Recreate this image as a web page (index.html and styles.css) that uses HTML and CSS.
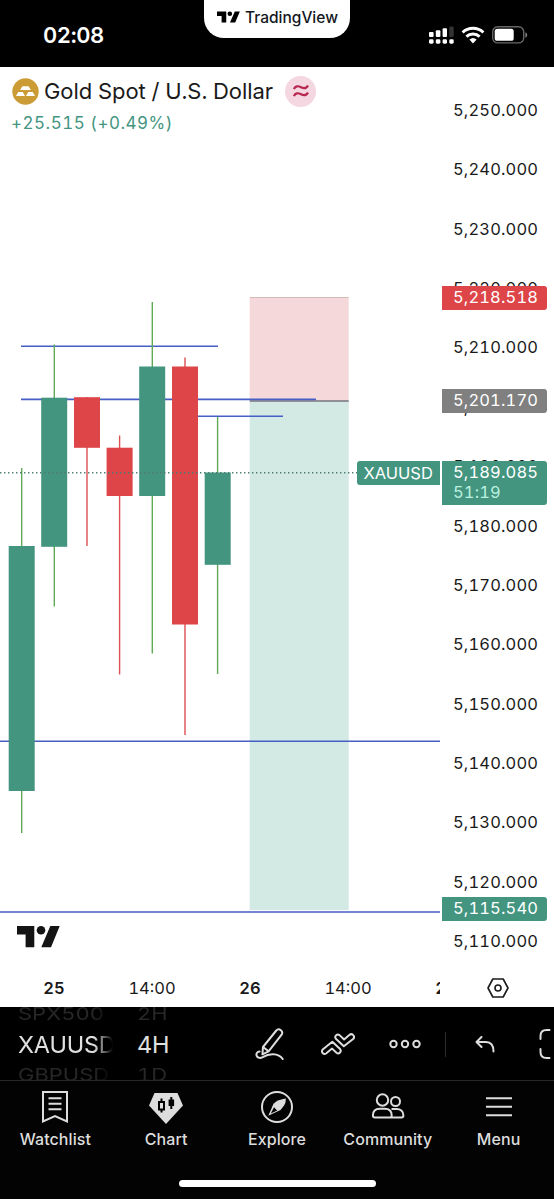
FILE: index.html
```html
<!DOCTYPE html>
<html lang="en">
<head>
    <meta charset="UTF-8">
    <meta name="viewport" content="width=device-width, initial-scale=1.0">
    <title>XAUUSD 4H</title>
    <link rel="stylesheet" href="styles.css">
</head>
<body>
    <header class="status-bar">
        <div class="clock">02:08</div>
        <div class="brand">
            <svg width="23" height="12" viewBox="0 0 43 21"><path d="M0 0h17.300v21H8.600V8.500H0z M34 21h-9.700L33.300 0h9.400z"/><circle cx="24" cy="4.300" r="4.300"/></svg>
            <span>TradingView</span>
        </div>
        <div class="status-icons">
            <svg class="signal" width="25" height="18" viewBox="0 0 25 18">
                <rect x="0" y="6" width="4.6" height="5" rx="1"/><rect x="6.8" y="4.3" width="4.6" height="6.7" rx="1"/>
                <rect x="13.6" y="2.2" width="4.4" height="8.8" rx="1"/><rect x="20.3" y="0.5" width="4.4" height="10.5" rx="1" fill="#333"/>
                <rect x="0" y="13.3" width="4.6" height="4.4" rx="1.4"/><rect x="6.8" y="13.3" width="4.6" height="4.4" rx="1.4"/>
                <rect x="13.6" y="13.3" width="4.4" height="4.4" rx="1.4"/><rect x="20.3" y="13.3" width="4.4" height="4.4" rx="1.4"/>
            </svg>
            <svg class="wifi" width="24" height="18" viewBox="0 0 24 18">
                <g fill="none" stroke="#fff" stroke-width="3"><path d="M1.600 6.500a15 15 0 0 1 20.800 0"/><path d="M5.400 10.600a9.600 9.600 0 0 1 13.200 0"/></g>
                <path d="M8.400 13.600a5.400 5.400 0 0 1 7.200 0L12 17.400z"/>
            </svg>
            <svg class="battery" width="36" height="18" viewBox="0 0 36 18">
                <rect x="0.7" y="0.7" width="31" height="16.200" rx="5" fill="none" stroke="#666" stroke-width="1.4"/>
                <rect x="2.7" y="2.8" width="19" height="12" rx="2.6"/>
                <path d="M33.300 6.200q2 .8 2 2.800t-2 2.800z" fill="#777"/>
            </svg>
        </div>
    </header>

    <main class="chart">
        <section class="plot">
            <div class="legend">
                <div class="legend-title">
                    <svg width="27" height="27" viewBox="0 0 27 27">
                        <circle cx="13.5" cy="13.5" r="13.2" fill="#cb9c35"/>
                        <path d="M10.400 8.200h6.200l2.200 3.800H8.200z M6.300 13.900h4.500l2.200 4H4z M16.200 13.900h4.500l2.300 4h-9z" fill="#fff"/>
                    </svg>
                    <h1>Gold Spot / U.S. Dollar</h1>
                    <span class="approx">
                        <svg width="16" height="14" viewBox="0 0 16 14"><g fill="none" stroke="#b7274f" stroke-width="2.2"><path d="M.9 5.200C2.200 1.800 5 1.600 8 3.200s5.400 1.200 7-1.800"/><path d="M.9 12.200c1.300-3.400 4.100-3.600 7.100-2s5.400 1.200 7-1.800"/></g></svg>
                    </span>
                </div>
                <div class="change">+25.515 (+0.49%)</div>
            </div>

            <svg class="candles" width="440" height="895" viewBox="0 67 440 895">
                <!-- short position -->
                <rect x="249.7" y="297.5" width="99" height="103.5" fill="#f5d8da"/>
                <rect x="249.7" y="401" width="99" height="509" fill="#d3e9e4"/>
                <path d="M249.700 297.500h99" stroke="#d3bdb6"/>
                <path d="M249.700 401h99" stroke="#75757f" stroke-width="1.5"/>
                <!-- levels -->
                <g stroke="#465fc5" stroke-width="1.6">
                    <path d="M21 346.300h197M21 399.400h295M185 416.300h98M0 741.300h440M0 912h440"/>
                </g>
                <g stroke="#62a957" stroke-width="1.4">
                    <path d="M21.700 468v365M54.300 344.500v262M152.300 302v351.500M217.600 417v257"/>
                </g>
                <g stroke="#dc5055" stroke-width="1.4">
                    <path d="M87 397v149M119.600 435.500v239M185 357.500v377.500"/>
                </g>
                <g fill="#43957f">
                    <rect x="8.7" y="546" width="26" height="245"/>
                    <rect x="41.2" y="397.7" width="26" height="149.1"/>
                    <rect x="139.2" y="366.5" width="26" height="129.5"/>
                    <rect x="204.7" y="472.5" width="26" height="92.3"/>
                </g>
                <g fill="#dd4549">
                    <rect x="74" y="397.2" width="26" height="50.6"/>
                    <rect x="106.6" y="447.7" width="26" height="48.3"/>
                    <rect x="172" y="366.5" width="26" height="258"/>
                </g>
                <path d="M0 472.700h357" stroke="#4d7d70" stroke-width="1.4" stroke-dasharray="1.4 2.600"/>
                <g fill="#141414" transform="translate(17 926)">
                    <path d="M0 0h17.300v21.300H8.600V8.600H0z M34 21.300h-9.700L33.300 0h9.400z"/><circle cx="24" cy="4.3" r="4.3"/>
                </g>
            </svg>
            <div class="tag symbol-tag">XAUUSD</div>

            <div class="time-scale">
                <span class="day">25</span>
                <span>14:00</span>
                <span class="day">26</span>
                <span>14:00</span>
                <span class="day">27</span>
            </div>
        </section>

        <aside class="price-scale">
            <div class="prices">
                <span>5,250.000</span>
                <span>5,240.000</span>
                <span>5,230.000</span>
                <span>5,220.000</span>
                <span>5,210.000</span>
                <span>5,200.000</span>
                <span>5,190.000</span>
                <span>5,180.000</span>
                <span>5,170.000</span>
                <span>5,160.000</span>
                <span>5,150.000</span>
                <span>5,140.000</span>
                <span>5,130.000</span>
                <span>5,120.000</span>
                <span>5,110.000</span>
            </div>
            <div class="tag price-tag stop">5,218.518</div>
            <div class="tag price-tag entry">5,201.170</div>
            <div class="tag price-tag last">5,189.085<small>51:19</small></div>
            <div class="tag price-tag target">5,115.540</div>
            <div class="scale-settings">
                <svg width="22" height="20" viewBox="0 0 22 20" fill="none" stroke="#1a1a1a" stroke-width="1.6" stroke-linejoin="round"><path d="M5.800 1h10.400L21 10l-4.800 9H5.800L1 10z"/><circle cx="11" cy="10" r="3"/></svg>
            </div>
        </aside>
    </main>

    <div class="toolbar">
        <div class="picker symbols">
            <span class="ghost">SPX500</span>
            <span class="current">XAUUSD</span>
            <span class="ghost">GBPUSD</span>
        </div>
        <div class="picker intervals">
            <span class="ghost">2H</span>
            <span class="current">4H</span>
            <span class="ghost">1D</span>
        </div>
        <button class="tool" aria-label="Draw">
            <svg width="30" height="34" viewBox="0 0 30 34"><path d="M8 20L21.300 3.500a3.400 3.400 0 0 1 5.300 4.200L13.600 24.300 7.400 27.300z M8 20l5.600 4.300 M4.600 24.500c-2.600.2-3.700 2.400-2.900 4.400.8 2.200 3.600 2.600 6 1.200 6-3.800 15.700-4.600 20 1.900"/></svg>
        </button>
        <button class="tool" aria-label="Indicators">
            <svg width="34" height="22" viewBox="0 0 34 22"><path d="M1.700 16.500L11.300 8.700l7.800 7.400a2.600 2.600 0 0 1-3.600 3.700l-4.400-4.200-5.500 4.500a2.500 2.500 0 0 1-3.900-3.600z M32.100 6L22.800 13.300 14.900 5.800a2.600 2.600 0 0 1 3.600-3.700l4.600 4.400 5.200-4.400A2.500 2.500 0 0 1 32.100 6z"/></svg>
        </button>
        <button class="tool" aria-label="More">
            <svg width="32" height="10" viewBox="0 0 32 10"><circle cx="4.5" cy="5" r="3.2"/><circle cx="16" cy="5" r="3.2"/><circle cx="27.5" cy="5" r="3.2"/></svg>
        </button>
        <span class="separator"></span>
        <button class="tool" aria-label="Undo">
            <svg width="20" height="17" viewBox="0 0 20 17"><path d="M6.500 1L1.500 6l5 5M1.500 6H11c4.500 0 7.500 3 7.500 9.500"/></svg>
        </button>
        <button class="tool fullscreen" aria-label="Fullscreen">
            <svg width="34" height="30" viewBox="0 0 34 30"><path d="M1.500 10V7c0-4 2-6 6-6h3M1.500 20v3c0 4 2 6 6 6h3M23.500 1h3c4 0 6 2 6 6v3M32.500 20v3c0 4-2 6-6 6h-3"/></svg>
        </button>
    </div>

    <nav class="tabs">
        <a class="tab">
            <svg width="34" height="34" viewBox="0 0 34 34"><path d="M5 2h24v29.500l-12-5.500-12 5.500z M10.500 8.300h13M10.500 13.800h13M10.500 19.300h13"/></svg>
            <span>Watchlist</span>
        </a>
        <a class="tab active">
            <svg width="34" height="34" viewBox="0 0 34 34"><path class="solid" d="M5.500 3h23L34 15.500 17 34 0 15.500z"/><path class="dark" d="M12.500 8.500v14M22.300 7v12"/><rect x="10" y="12" width="5" height="7.500" fill="#ddd" stroke="#000" stroke-width="2"/><rect x="19.600" y="9.500" width="5.500" height="6.500" fill="#000" stroke="none"/></svg>
            <span>Chart</span>
        </a>
        <a class="tab">
            <svg width="34" height="34" viewBox="0 0 34 34"><circle cx="17" cy="17" r="15"/><path class="solid" d="M25.900 8.500q0 4.600-2 7.300L20.500 20 8.300 25.700 13.500 13.700q4.500-4.300 12.400-5.200z"/><path class="hole" d="M10.800 23.500l3.200-6.300 3.200 3.200z"/></svg>
            <span>Explore</span>
        </a>
        <a class="tab">
            <svg width="34" height="34" viewBox="0 0 34 34"><circle cx="11.500" cy="10" r="5.700"/><circle cx="24.500" cy="11.500" r="4.500"/><path d="M1.900 25.500c0-4.500 2.600-6.700 7-6.700h4.800c4.400 0 7 2.200 7 6.700 0 1.400-.7 2-2 2H3.900c-1.300 0-2-.6-2-2z M20.500 19h5c4.300 0 6.900 2.600 6.900 6.500 0 1.400-.7 2-2 2H18.500"/></svg>
            <span>Community</span>
        </a>
        <a class="tab">
            <svg width="34" height="34" viewBox="0 0 34 34"><path d="M4 8.300h26M4 16.700h26M4 25.300h26"/></svg>
            <span>Menu</span>
        </a>
    </nav>
    <footer class="home-indicator"><span></span></footer>
</body>
</html>
```

FILE: styles.css
```css
* {
    box-sizing: border-box;
}

body {
    margin: 0;
    width: 554px;
    height: 1199px;
    overflow: hidden;
    background-color: #000;
    color: #1a1a1a;
    font-family: Inter, "Liberation Sans", sans-serif;
    font-variant-numeric: tabular-nums;
    display: flex;
    flex-direction: column;
}

svg {
    display: block;
    flex: none;
}

/* Status bar */
.status-bar {
    height: 67px;
    flex: none;
    display: grid;
    grid-template-columns: 204px 146px 204px;
    color: #fff;
}

.clock {
    padding: 22px 0 0 43px;
    font-size: 22px;
    line-height: 27px;
    font-weight: 600;
    letter-spacing: -0.4px;
}

.brand {
    height: 38px;
    background-color: #fff;
    border-radius: 0 0 20px 20px;
    color: #131722;
    display: flex;
    align-items: center;
    gap: 5px;
    padding: 0 0 4px 13px;
    font-size: 15.5px;
    font-weight: 500;
}

.status-icons {
    display: flex;
    align-items: flex-start;
    gap: 8px;
    padding: 26px 0 0 79px;
    fill: #fff;
}

.wifi {
    margin-left: -1px;
}

.battery {
    margin-left: -1.5px;
}

/* Chart */
.chart {
    height: 940px;
    flex: none;
    display: grid;
    grid-template-columns: 440px 114px;
    background-color: #fff;
}

.plot {
    position: relative;
    display: flex;
    flex-direction: column;
    overflow: hidden;
}

.legend {
    position: absolute;
    top: 8px;
    left: 12px;
}

.legend-title {
    display: flex;
    align-items: center;
    height: 32px;
}

.legend h1 {
    margin: 0 12px 0 5px;
    font-size: 22px;
    font-weight: 400;
    letter-spacing: -0.07px;
    white-space: nowrap;
}

.approx {
    width: 31px;
    height: 31px;
    border-radius: 50%;
    background-color: #f5d7e1;
    display: flex;
    align-items: center;
    justify-content: center;
}

.change {
    margin-top: 6px;
    margin-left: -1px;
    color: #43957f;
    font-size: 17px;
    line-height: 21px;
    letter-spacing: 0.5px;
}

.tag {
    position: absolute;
    height: 24px;
    color: #fff;
    font-size: 16.5px;
    line-height: 23px;
}

.symbol-tag {
    left: 356.5px;
    top: 394px;
    width: 83px;
    padding-left: 7px;
    line-height: 24px;
    background-color: #43957f;
    border-radius: 3px 0 0 3px;
}

.time-scale {
    display: flex;
    height: 45px;
    margin-left: 5px;
    font-size: 16.5px;
    line-height: 53px;
}

.time-scale span {
    flex: 0 0 98px;
    text-align: center;
}

.time-scale .day {
    font-weight: 600;
}

/* Price scale */
.price-scale {
    position: relative;
    padding-top: 13.1px;
}

.prices {
    height: 891px;
    display: grid;
    grid-auto-rows: 59.4px;
    align-items: center;
    padding-left: 13px;
    font-size: 16.5px;
    letter-spacing: 0.15px;
}

.price-tag {
    left: 1.7px;
    width: 105px;
    padding-left: 11.3px;
    letter-spacing: 0.15px;
    border-radius: 0 3px 3px 0;
}

.stop {
    top: 219px;
    background-color: #dd4549;
}

.entry {
    top: 322px;
    background-color: #808080;
}

.last {
    top: 394px;
    height: 44px;
    background-color: #43957f;
}

.last small {
    display: block;
    font-size: 16.5px;
    line-height: 17px;
    color: #b9f0df;
}

.target {
    top: 830px;
    background-color: #43957f;
}

.scale-settings {
    display: flex;
    padding: 7px 0 0 47px;
}

/* Toolbar */
.toolbar {
    height: 74px;
    flex: none;
    display: flex;
    align-items: center;
    overflow: hidden;
    border-bottom: 1px solid #262626;
    color: #e0e0e0;
    padding: 1px 0 0 18px;
}

.picker {
    flex: none;
    display: flex;
    flex-direction: column;
    overflow: hidden;
    white-space: nowrap;
}

.picker .current {
    font-size: 23.5px;
    line-height: 35px;
    letter-spacing: -0.2px;
}

.picker .ghost {
    color: #272727;
    font-size: 22px;
    line-height: 26px;
    transform: scaleY(0.8);
}

.symbols {
    width: 95px;
    margin-right: 24px;
    -webkit-mask-image: linear-gradient(90deg, #000 80%, transparent);
    mask-image: linear-gradient(90deg, #000 80%, transparent);
}

.intervals {
    width: 99px;
}

.tool {
    flex: none;
    width: 67.8px;
    height: 60px;
    margin: 0;
    padding: 0;
    border: 0;
    background: none;
    display: flex;
    align-items: center;
    justify-content: center;
}

.tool svg,
.tab svg {
    fill: none;
    stroke: #ddd;
    stroke-width: 2;
    stroke-linecap: round;
    stroke-linejoin: round;
}

.separator {
    flex: none;
    width: 1px;
    height: 25px;
    margin: 0 5px 0 6px;
    background-color: #2c2c2c;
}

.fullscreen {
    justify-content: flex-start;
    margin-left: 20px;
}

/* Bottom tabs */
.tabs {
    flex: none;
    height: 84px;
    display: grid;
    grid-template-columns: repeat(5, 1fr);
    background-color: #030303;
}

.tab {
    display: flex;
    flex-direction: column;
    align-items: center;
    padding-top: 9px;
    color: #ddd;
    font-size: 16px;
    line-height: 20px;
    font-weight: 500;
    letter-spacing: 0.1px;
}

.tab span {
    margin-top: 5px;
}

.tab svg {
    stroke-linecap: butt;
    stroke-linejoin: miter;
}

.tab .solid {
    fill: #ddd;
    stroke: none;
}

.tab .dark {
    stroke: #000;
}

.tab .hole {
    fill: #030303;
    stroke: none;
}

.home-indicator {
    flex: 1;
    display: flex;
    justify-content: center;
    padding-top: 15px;
    background-color: #030303;
}

.home-indicator span {
    width: 197px;
    height: 7px;
    border-radius: 4px;
    background-color: #fff;
}
```
